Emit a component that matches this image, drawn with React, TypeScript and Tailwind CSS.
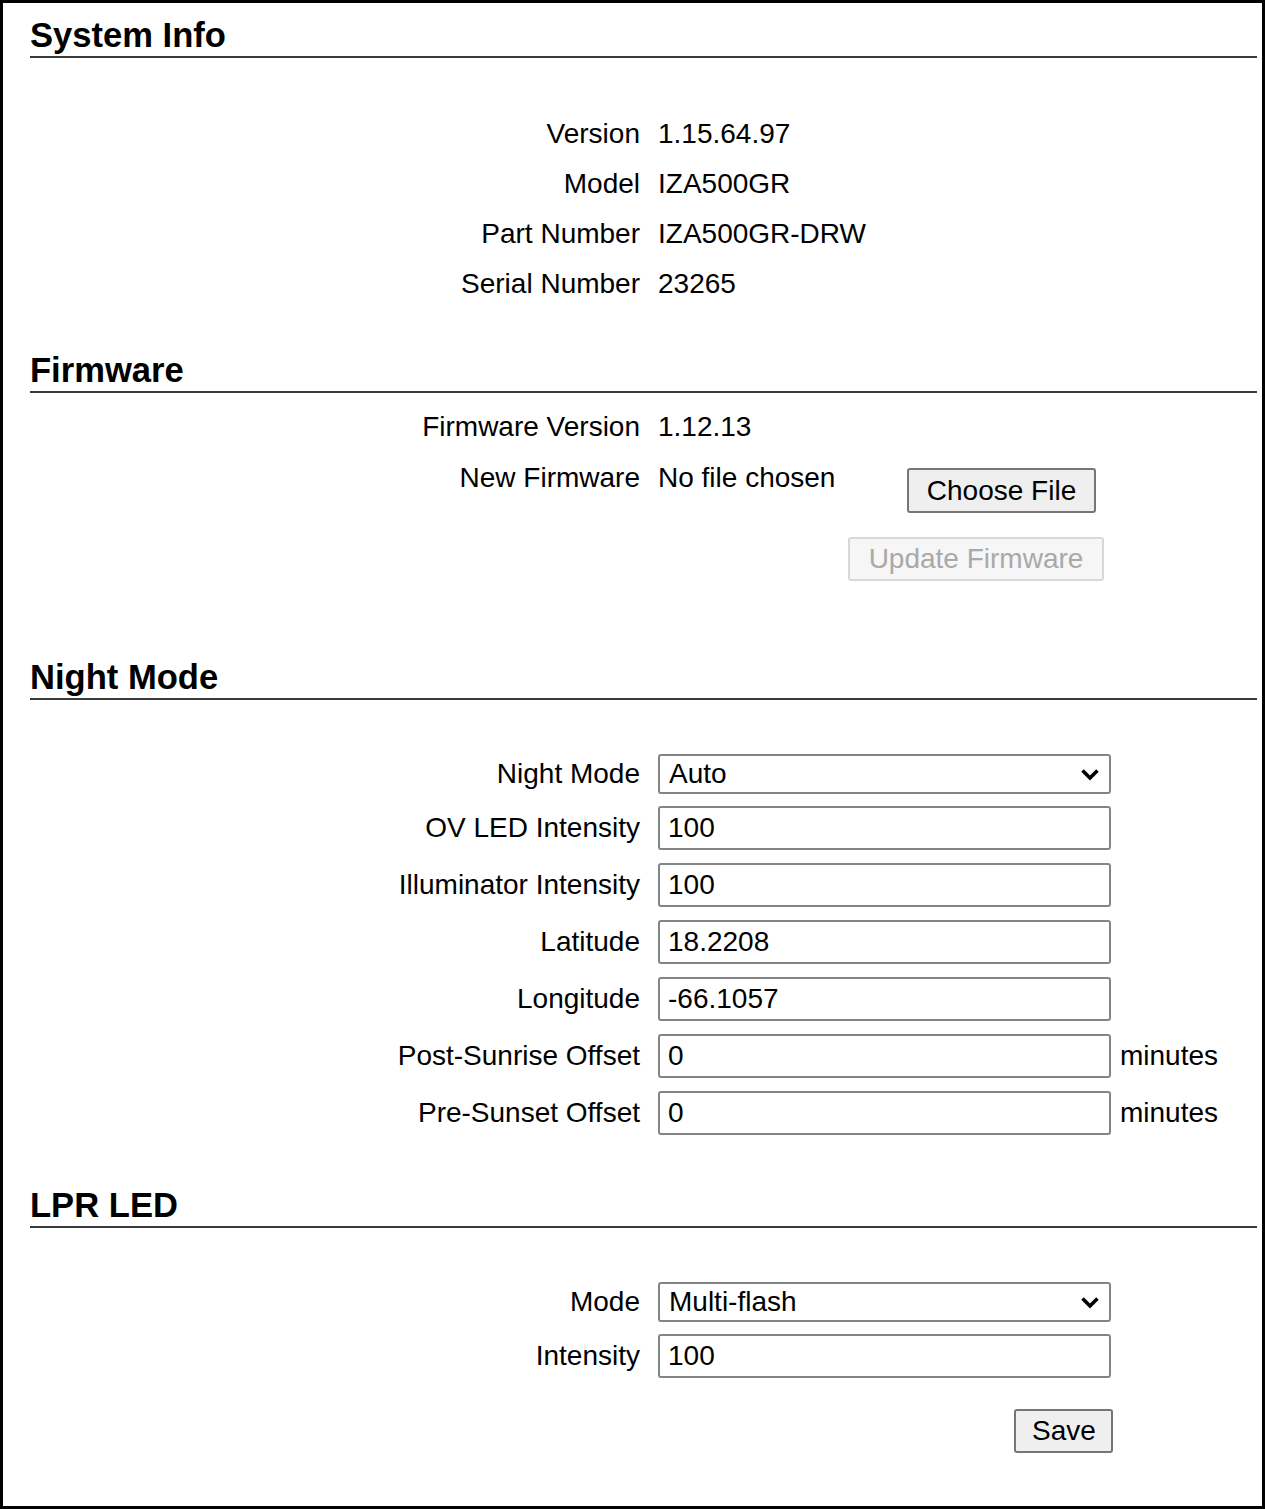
import { ReactNode } from "react";

const Heading = ({ title, className }: { title: string; className: string }) => (
  <h2
    className={`text-[34.6px] font-bold leading-[40px] pb-[1px] border-b-2 border-[#3a3a3a] ${className}`}
  >
    {title}
  </h2>
);

const Row = ({
  label,
  children,
  className = "",
}: {
  label: string;
  children: ReactNode;
  className?: string;
}) => (
  <div className={`flex items-center gap-[18px] ${className}`}>
    <div className="w-[610px] shrink-0 text-right whitespace-nowrap">{label}</div>
    <div className="flex items-center">{children}</div>
  </div>
);

const Chevron = () => (
  <svg
    width="22"
    height="22"
    viewBox="0 0 22 22"
    className="absolute right-[10px] top-1/2 -translate-y-1/2 pointer-events-none"
  >
    <path d="M3.5 7.5 L11 15 L18.5 7.5" fill="none" stroke="#000" strokeWidth="3.6" />
  </svg>
);

const Select = ({ value }: { value: string }) => (
  <div className="relative w-[453px]">
    <select
      defaultValue={value}
      className="w-full h-[40px] appearance-none bg-white border-2 border-[#858585] rounded-[3px] pl-[9px] text-[28px] leading-[34px] text-black outline-none"
    >
      <option>{value}</option>
    </select>
    <Chevron />
  </div>
);

const Input = ({ value }: { value: string }) => (
  <input
    defaultValue={value}
    className="w-[453px] h-[44px] bg-white border-2 border-[#858585] rounded-[3px] pl-[8px] text-[28px] text-black outline-none"
  />
);

const Button = ({
  children,
  disabled,
  className = "",
}: {
  children: ReactNode;
  disabled?: boolean;
  className?: string;
}) => (
  <button
    type="button"
    disabled={disabled}
    className={`h-[44px] px-[16px] text-[28px] leading-[32px] rounded-[3px] border-2 ${
      disabled
        ? "bg-[#f6f6f6] border-[#d8d8d8] text-[#a9a9a9]"
        : "bg-[#efefef] border-[#767676] text-black"
    } ${className}`}
  >
    {children}
  </button>
);

export default function App() {
  return (
    <div className="w-[1265px] h-[1509px] border-[3px] border-black bg-white pl-[27px] pr-[5px] text-black text-[28px] leading-[32px] font-['Liberation_Sans',Arial,sans-serif]">
      {/* SYSTEM INFO */}
      <Heading title="System Info" className="mt-[12px]" />
      <div className="mt-[51px]">
        <Row label="Version" className="h-[50px]">1.15.64.97</Row>
        <Row label="Model" className="h-[50px]">IZA500GR</Row>
        <Row label="Part Number" className="h-[50px]">IZA500GR-DRW</Row>
        <Row label="Serial Number" className="h-[50px]">23265</Row>
      </div>

      {/* FIRMWARE */}
      <Heading title="Firmware" className="mt-[41px]" />
      <Row label="Firmware Version" className="h-[50px] mt-[9px]">1.12.13</Row>
      <div className="flex items-start gap-[18px]">
        <div className="w-[610px] shrink-0 text-right mt-[10px]">New Firmware</div>
        <div className="flex items-start">
          <span className="w-[249px] mt-[10px]">No file chosen</span>
          <Button className="mt-[16px] w-[189px] h-[45px]">Choose File</Button>
        </div>
      </div>
      <div className="pl-[818px] mt-[24px]">
        <Button disabled className="w-[256px] h-[43px]">
          Update Firmware
        </Button>
      </div>

      {/* NIGHT MODE */}
      <Heading title="Night Mode" className="mt-[76px]" />
      <div className="mt-[54px] flex flex-col gap-[13px]">
        <Row label="Night Mode" className="-mb-[1px]">
          <Select value="Auto" />
        </Row>
        <Row label="OV LED Intensity">
          <Input value="100" />
        </Row>
        <Row label="Illuminator Intensity">
          <Input value="100" />
        </Row>
        <Row label="Latitude">
          <Input value="18.2208" />
        </Row>
        <Row label="Longitude">
          <Input value="-66.1057" />
        </Row>
        <Row label="Post-Sunrise Offset">
          <Input value="0" />
          <span className="ml-[9px]">minutes</span>
        </Row>
        <Row label="Pre-Sunset Offset">
          <Input value="0" />
          <span className="ml-[9px]">minutes</span>
        </Row>
      </div>

      {/* LPR LED */}
      <Heading title="LPR LED" className="mt-[50px]" />
      <div className="mt-[54px] flex flex-col gap-[13px]">
        <Row label="Mode" className="-mb-[1px]">
          <Select value="Multi-flash" />
        </Row>
        <Row label="Intensity">
          <Input value="100" />
        </Row>
      </div>
      <div className="pl-[984px] mt-[31px]">
        <Button className="w-[99px]">Save</Button>
      </div>
    </div>
  );
}
